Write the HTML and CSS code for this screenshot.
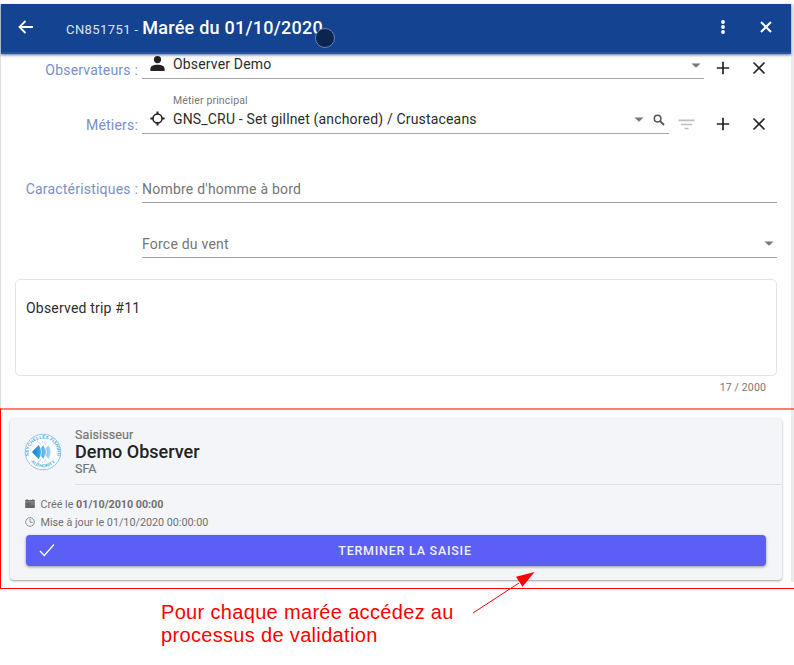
FILE: index.html
```html
<!DOCTYPE html>
<html lang="fr">
<head>
<meta charset="utf-8">
<title>Marée du 01/10/2020</title>
<link rel="stylesheet" href="styles.css">
</head>
<body>
<div class="page">
  <div class="window">
    <header class="toolbar">
      <svg class="back" width="16" height="14" viewBox="0 0 16 14"><path d="M7.500 1 1.500 7l6 6M1.500 7H15" fill="none" stroke="#fff" stroke-width="1.800"/></svg>
      <h1 class="title"><span class="code">CN851751 - </span>Marée du 01/10/2020</h1>
      <svg class="more" width="6" height="16" viewBox="0 0 6 16" fill="#fff"><circle cx="3" cy="3" r="1.900"/><circle cx="3" cy="8" r="1.900"/><circle cx="3" cy="13" r="1.900"/></svg>
      <svg class="close" width="14" height="14" viewBox="0 0 14 14"><path d="m2 2 10 10M12 2 2 12" stroke="#fff" stroke-width="2"/></svg>
      <span class="touch"></span>
    </header>

    <main class="form">
      <div class="row observers">
        <label class="label">Observateurs :</label>
        <div class="field">
          <svg class="lead" width="15" height="15" viewBox="0 0 15 15" fill="#222"><circle cx="7.500" cy="3.600" r="3.600"/><path d="M.4 15v-2c0-3 3-4.200 7.100-4.200s7.100 1.200 7.100 4.200v2z"/></svg>
          <span class="value obs">Observer Demo</span>
          <svg class="caret" width="10" height="5" viewBox="0 0 10 5"><path d="M.5.5h9L5 4.800z"/></svg>
        </div>
        <svg class="act add" width="14" height="14" viewBox="0 0 14 14"><path d="M7 .8v12.400M.8 7h12.400"/></svg>
        <svg class="act del" width="14" height="14" viewBox="0 0 14 14"><path d="m1.500 1.500 11 11M12.500 1.500l-11 11"/></svg>
      </div>

      <div class="row metiers">
        <label class="label">Métiers:</label>
        <div class="field">
          <svg class="lead" width="15" height="15" viewBox="0 0 15 15"><circle cx="7.500" cy="7.500" r="4.500" fill="none" stroke="#222" stroke-width="1.500"/><path d="M7.500.4v3M7.500 11.600v3M.4 7.500h3M11.600 7.500h3" stroke="#222" stroke-width="2"/></svg>
          <div class="stack">
            <span class="hint">Métier principal</span>
            <span class="value gear">GNS_CRU - Set gillnet (anchored) / Crustaceans</span>
          </div>
          <svg class="caret" width="10" height="5" viewBox="0 0 10 5"><path d="M.5.5h9L5 4.800z"/></svg>
          <svg class="search" width="12" height="12" viewBox="0 0 12 12" fill="none" stroke="#555"><circle cx="4.600" cy="4.600" r="3.300" stroke-width="1.500"/><path d="m7 7 4 4" stroke-width="1.800"/></svg>
        </div>
        <svg class="filter" width="17" height="11" viewBox="0 0 17 11" fill="#bdbdbd"><path d="M.5.5h16v1.800H.500zM3 4.700h11v1.600H3zM6.500 8.700h4v1.600h-4z"/></svg>
        <svg class="act add" width="14" height="14" viewBox="0 0 14 14"><path d="M7 .8v12.400M.8 7h12.400"/></svg>
        <svg class="act del" width="14" height="14" viewBox="0 0 14 14"><path d="m1.500 1.500 11 11M12.500 1.500l-11 11"/></svg>
      </div>

      <div class="row crew">
        <label class="label carac">Caractéristiques :</label>
        <div class="field"><span class="placeholder">Nombre d'homme à bord</span></div>
      </div>
      <div class="row wind">
        <span class="label"></span>
        <div class="field"><span class="placeholder force">Force du vent</span>
          <svg class="caret" width="10" height="5" viewBox="0 0 10 5"><path d="M.5.5h9L5 4.800z"/></svg>
        </div>
      </div>

      <div class="comment">Observed trip #11</div>
      <div class="counter">17 / 2000</div>
    </main>

    <section class="card">
      <div class="person">
        <svg class="logo" width="38" height="38" viewBox="0 0 38 38">
          <defs>
            <path id="arcTop" d="M5.500 25a14.400 14.400 0 1 1 27 0"/>
            <path id="arcBottom" d="M4.500 26a16.800 16.800 0 0 0 29 0"/>
            <linearGradient id="sea"><stop offset="0" stop-color="#087fd0"/><stop offset=".4" stop-color="#3fa6e4"/><stop offset="1" stop-color="#b5def8"/></linearGradient>
          </defs>
          <circle cx="19" cy="19" r="17.800" fill="#fff" stroke="#91c6e7" stroke-width="1"/>
          <g class="seal"><text><textPath href="#arcTop" startOffset="50%">SEYCHELLES FISHING</textPath></text><text><textPath href="#arcBottom" startOffset="50%">AUTHORITY</textPath></text></g>
          <path d="M8 19 15 11.500l1.500 4 3-3.500 1.500 4 4-4 2.500 7-2.500 7-4-4-1.500 4-3-3.500-1.500 4z" fill="url(#sea)"/>
          <path d="M14 10q7 9 0 18M19 10q7 9 0 18M24 11q6 8 0 16" fill="none" stroke="#fff" stroke-width=".7"/>
          <path d="M13 8q3 1 4 4M18 8q3 1 4 4M17 26q-1 3-4 4M22 26q-1 3-4 4" fill="none" stroke="#a9d7f1" stroke-width=".8"/>
        </svg>
        <div class="who">
          <span class="role">Saisisseur</span>
          <span class="name">Demo Observer</span>
          <span class="org">SFA</span>
        </div>
      </div>
      <div class="meta">
        <svg width="10" height="10" viewBox="0 0 10 10"><path d="M.2 1h9.600v8H.200z" fill="#666"/><path d="M0 2.900h10" stroke="#aaa" stroke-width=".8"/><path d="M2 0v1.500M8 0v1.500" stroke="#666"/><path d="M6 5h2.500" stroke="#999"/></svg>
        <span class="created">Créé le <b>01/10/2010 00:00</b></span>
      </div>
      <div class="meta">
        <svg width="10" height="10" viewBox="0 0 10 10" fill="none" stroke="#777" stroke-width=".8"><circle cx="5" cy="5" r="4.300"/><path d="M5 2v3.300h2.500"/></svg>
        <span class="updated">Mise à jour le 01/10/2020 00:00:00</span>
      </div>
      <button class="finish">
        <svg width="16" height="14" viewBox="0 0 16 14"><path d="m1 8 4.300 4.500L15 1.500" fill="none" stroke="#fff" stroke-width="1.300"/></svg>
        <span>TERMINER LA SAISIE</span>
      </button>
    </section>
  </div>
  <p class="note">Pour chaque marée accédez au<br>processus de validation</p>
  <div class="frame"></div>
  <svg class="arrow" width="64" height="44" viewBox="0 0 64 44"><path d="M1 42 47 12" stroke="#f00" stroke-width="1"/><path d="M62.500 1 44 5.700l6.500 10z" fill="#f00"/></svg>
</div>
</body>
</html>
```
FILE: styles.css
```css
* { box-sizing: border-box; }
body { margin: 0; background: #fff; font-family: Roboto, "Liberation Sans", sans-serif; }
svg { display: block; flex: none; }
.page { position: relative; width: 794px; height: 665px; padding-top: 4px; overflow: hidden; }
.window { height: 578px; border-left: 1px solid #dedede; border-right: 3px solid #ebebeb; }

.toolbar { position: relative; height: 50px; display: flex; align-items: center; padding: 0 18px 2px 17px; background: #144391; color: #fff; box-shadow: 0 1px 2px rgba(20, 67, 145, .6), 0 2px 4px rgba(0, 0, 0, .12); border-bottom: 2px solid #2a559b; }
.title { flex: 1; margin: 0 0 0 32px; font-size: 18px; font-weight: 500; letter-spacing: .25px; white-space: pre; }
.code { font-size: 13px; font-weight: 400; letter-spacing: .42px; color: #dbe3f0; }
.more { margin-right: 33px; }
.touch { position: absolute; left: 314px; top: 24px; width: 20px; height: 20px; border-radius: 50%; background: #0b2450; border: 1.5px solid #6683b5; }

.form { height: 364px; padding-right: 14px; }
.row { display: flex; height: 55px; align-items: flex-end; }
.label { width: 137px; text-align: right; font-size: 14px; line-height: 16px; letter-spacing: .2px; color: #7890c4; margin-right: 4px; }
.field { flex: 1; height: 100%; display: flex; align-items: flex-end; border-bottom: 1px solid #a6a6a6; }
.value { font-size: 14px; line-height: 16px; color: #2c2c2c; letter-spacing: .17px; }
.lead { margin: 0 8px 0 8px; }
.caret { margin-left: auto; fill: #777; }
.act { stroke: #222; stroke-width: 1.7; fill: none; }
.act.add { margin-left: 12px; }
.act.del { margin-left: 22px; margin-right: 11px; }

.observers { height: 25px; }
.observers .label { margin-bottom: 1px; }
.observers .lead { margin-bottom: 7px; }
.observers .value { margin-bottom: 6px; }
.observers .caret { margin-bottom: 10px; margin-right: 3px; }
.observers .act { margin-bottom: 4px; }
.metiers .label { margin-bottom: 1px; }
.metiers .lead { margin-bottom: 7px; }
.stack { display: flex; flex-direction: column; }
.hint { font-size: 10.5px; line-height: 12px; color: #777; margin-bottom: 4px; letter-spacing: .14px; }
.metiers .value { margin-bottom: 6px; }
.metiers .caret { margin-bottom: 11px; }
.search { margin: 0 4px 7px 9px; }
.filter { margin: 0 0 4px 9px; }
.metiers .act { margin-bottom: 3px; }
.metiers .act.add { margin-left: 21px; }
.crew { margin-top: 14px; }
.wind .field, .crew .field { border-bottom-color: #a0a0a0; }
.crew .label { margin-bottom: 6px; }
.placeholder { font-size: 14px; line-height: 16px; color: #757575; letter-spacing: .22px; margin-bottom: 5px; }
.wind .caret { margin: 0 3px 11px auto; }

.comment { margin: 21px 0 0 14px; height: 97px; border: 1px solid #e4e4e4; border-radius: 5px; padding: 20px 10px; font-size: 14px; line-height: 16px; letter-spacing: .2px; color: #2c2c2c; }
.counter { margin: 5px 11px 0 0; text-align: right; font-size: 10.5px; line-height: 13px; letter-spacing: .15px; color: #757575; }

.card { margin: 0 9px 0 9px; height: 162px; border-radius: 4px; background: #f4f5f9; box-shadow: 0 1px 3px rgba(0, 0, 0, .28), 0 1px 1px rgba(0, 0, 0, .15); }
.person { display: flex; height: 66px; }
.logo { margin: 15px 13px 0 14px; }
.seal text { font: 700 4.6px "Liberation Sans", sans-serif; fill: #4baade; text-anchor: middle; }
.who { flex: 1; height: 67px; border-bottom: 1px solid #dedfe3; display: flex; flex-direction: column; padding-top: 9px; color: #757575; }
.role { font-size: 12.5px; line-height: 15px; letter-spacing: .1px; -webkit-text-stroke: .2px #757575; }
.name { font-size: 18px; line-height: 20px; font-weight: 500; color: #222; }
.org { font-size: 12.5px; line-height: 14px; -webkit-text-stroke: .2px #757575; }
.meta { display: flex; align-items: center; gap: 5.500px; height: 18px; padding-left: 15px; font-size: 10.8px; letter-spacing: -.02px; color: #707070; }
.person + .meta { margin-top: 11px; }
.meta b { font-weight: 700; letter-spacing: -.05px; }
.finish { position: relative; display: flex; align-items: center; justify-content: center; width: 740px; height: 31px; margin: 4px 0 0 16px; padding: 0 0 0 16px; border: 0; border-radius: 4px; background: #5b5ff6; color: #fff; box-shadow: 0 1px 3px rgba(0, 0, 0, .4); font: 500 12.5px Roboto, sans-serif; letter-spacing: .76px; }
.finish svg { margin: -2px 0 0 -3px; }
.finish span { flex: 1; text-align: center; padding-right: 11px; margin-top: -1px; color: #f0f0ff; }

.note { margin: 19px 0 0 161px; color: #f00; font: 20px/23px "Liberation Sans", sans-serif; letter-spacing: .33px; }
.frame { position: absolute; left: 0; top: 408px; width: 796px; height: 181px; border: 1px solid #f00; border-top: 2px solid rgba(255, 0, 0, .52); }
.arrow { position: absolute; left: 472px; top: 571px; }
```
